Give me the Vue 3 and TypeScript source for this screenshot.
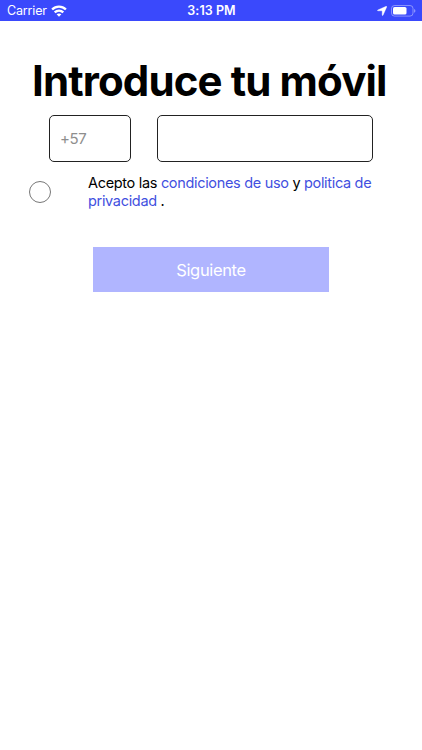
<script setup lang="ts">
import { ref } from 'vue'

const prefix = ref('')
const phone = ref('')
const accepted = ref(false)
</script>

<template>
  <div class="screen">
    <header class="status">
      <div class="status-left">
        <span class="carrier">Carrier</span>
        <svg class="wifi" width="16" height="12" viewBox="0 0 16 12" fill="none" stroke="#fff" stroke-width="2.4">
          <path d="M1.1 4.5C5 .7 11 .7 14.9 4.5" />
          <path d="M3.7 7.4C6.2 5.1 9.8 5.1 12.3 7.4" />
          <path d="M8 11.7 5.6 9.3C7 8.1 9 8.1 10.4 9.3Z" fill="#fff" stroke="none" />
        </svg>
      </div>
      <span class="time">3:13 PM</span>
      <div class="status-right">
        <svg width="10" height="10" viewBox="0 0 10 10" fill="#fff" stroke="#fff" stroke-width=".4">
          <path d="M9.2.3C9.7.1 9.9.4 9.7.9L6 9.2C5.8 9.7 5.2 9.6 5.2 9V5.2Q5.2 4.8 4.8 4.8H1C.4 4.8.3 4.2.8 4Z" />
        </svg>
        <svg width="25" height="12" viewBox="0 0 25 12">
          <rect x=".5" y=".5" width="21.5" height="10.6" rx="3" fill="none" stroke="#fff" stroke-opacity=".4" />
          <rect x="2" y="2" width="13.5" height="7.6" rx="1.6" fill="#fff" />
          <path d="M23.2 4v3.8c1.6-.6 1.6-3.2 0-3.8Z" fill="#fff" fill-opacity=".5" />
        </svg>
      </div>
    </header>

    <main>
      <h1>Introduce tu móvil</h1>
      <div class="fields">
        <input v-model="prefix" class="field prefix" type="tel" placeholder="+57" />
        <input v-model="phone" class="field phone" type="tel" />
      </div>
      <div class="terms">
        <button class="radio" :class="{ on: accepted }" type="button" @click="accepted = !accepted"></button>
        <p>Acepto las <a>condiciones de uso</a> y <a>politica de<br />privacidad</a> .</p>
      </div>
      <button class="next" type="button">Siguiente</button>
    </main>
  </div>
</template>

<style>
body {
  background: #fff;
}
</style>

<style scoped>
.screen {
  height: 750px;
  overflow: hidden;
  background: #fff;
  color: #000;
  font-family: Inter, "Liberation Sans", sans-serif;
}
.status {
  display: grid;
  grid-template-columns: 1fr auto 1fr;
  align-items: center;
  height: 21px;
  box-sizing: border-box;
  padding: 1px 6px 0 7px;
  background: #3a49fc;
  color: #fff;
  font-size: 12.5px;
  line-height: 20px;
}
.status-left,
.status-right {
  display: flex;
  align-items: center;
}
.status-left {
  gap: 4px;
}
.carrier {
  letter-spacing: -0.15px;
}
.time {
  font-weight: 600;
  letter-spacing: 0.05px;
}
.status-right {
  justify-content: flex-end;
  gap: 4px;
}
h1 {
  margin: 35px 0 0 32px;
  font-size: 42px;
  line-height: 50px;
  font-weight: 700;
  letter-spacing: -0.87px;
  white-space: nowrap;
}
.fields {
  display: flex;
  gap: 26px;
  margin: 9px 0 0 49px;
}
.field {
  box-sizing: border-box;
  height: 47px;
  padding: 0 10px;
  border: 1px solid #222;
  border-radius: 5px;
  background: #fff;
  outline: none;
  font-family: inherit;
  font-size: 15px;
  letter-spacing: -0.4px;
}
.field::placeholder {
  color: #8e8e8e;
  opacity: 1;
}
.prefix {
  width: 82px;
}
.phone {
  width: 216px;
}
.terms {
  display: flex;
  align-items: flex-start;
  gap: 37px;
  margin: 12px 0 0 29px;
}
.radio {
  flex: none;
  box-sizing: border-box;
  width: 22px;
  height: 22px;
  margin-top: 7px;
  padding: 0;
  border: 1px solid #777;
  border-radius: 50%;
  background: #fff;
}
.radio.on {
  background: #3a49fc;
}
.terms p {
  margin: 0;
  font-size: 14.5px;
  line-height: 18px;
  letter-spacing: -0.32px;
  white-space: nowrap;
}
.terms a {
  color: #4250e0;
}
.next {
  display: block;
  width: 236px;
  height: 45px;
  margin: 37px 0 0 93px;
  padding: 0;
  border: 0;
  background: #b0b5ff;
  color: #fff;
  font-family: inherit;
  font-size: 16.5px;
  letter-spacing: -0.35px;
}
</style>
